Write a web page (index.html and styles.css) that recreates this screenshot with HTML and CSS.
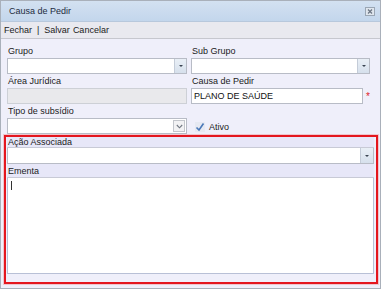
FILE: index.html
```html
<!DOCTYPE html>
<html lang="pt">
<head>
    <meta charset="UTF-8">
    <meta name="viewport" content="width=device-width, initial-scale=1.0">
    <title>Causa de Pedir</title>
    <link rel="stylesheet" href="styles.css">
</head>
<body>

    <div class="window">
        <!-- Title bar -->
        <div class="titlebar">
            <span class="title">Causa de Pedir</span>
            <span class="close-btn">
                <svg width="10" height="9" viewBox="0 0 10 9">
                    <rect x="0.5" y="0.5" width="9" height="8" fill="#dfe6ee" stroke="#9aa6b4"/>
                    <path d="M3 2.5 L7 6.5 M7 2.5 L3 6.5" stroke="#6a7482" stroke-width="1.2"/>
                </svg>
            </span>
        </div>

        <!-- Toolbar -->
        <div class="toolbar">
            <span>Fechar</span> <span class="sep">|</span> <span>Salvar</span> <span>Cancelar</span>
        </div>

        <div class="content">
            <div class="fields">
                <div class="field">
                    <label>Grupo</label>
                    <div class="combo">
                        <div class="combo-text"></div>
                        <div class="combo-btn"><span class="arrow"></span></div>
                    </div>
                </div>
                <div class="field">
                    <label>Sub Grupo</label>
                    <div class="combo">
                        <div class="combo-text"></div>
                        <div class="combo-btn"><span class="arrow"></span></div>
                    </div>
                </div>
                <div class="field">
                    <label>Área Jurídica</label>
                    <div class="input disabled"></div>
                </div>
                <div class="field">
                    <label>Causa de Pedir</label>
                    <div class="required-row">
                        <div class="input">PLANO DE SAÚDE</div>
                        <span class="asterisk">*</span>
                    </div>
                </div>
                <div class="field">
                    <label>Tipo de subsídio</label>
                    <div class="combo">
                        <div class="combo-text"></div>
                        <div class="chevron-btn">
                            <svg width="7" height="5" viewBox="0 0 7 5">
                                <path d="M0.8 1 L3.5 3.8 L6.2 1" fill="none" stroke="#6f7680" stroke-width="1.1"/>
                            </svg>
                        </div>
                    </div>
                </div>
                <div class="field check-field">
                    <span class="checkbox">
                        <svg width="10" height="10" viewBox="0 0 10 10">
                            <path d="M1.5 5.5 L4 8 L8.5 1.5" fill="none" stroke="#4a78b8" stroke-width="1.6"/>
                        </svg>
                    </span>
                    <span>Ativo</span>
                </div>
            </div>

            <!-- Highlighted section -->
            <div class="highlight">
                <div class="band first">Ação Associada</div>
                <div class="combo wide">
                    <div class="combo-text"></div>
                    <div class="combo-btn"><span class="arrow"></span></div>
                </div>
                <div class="band">Ementa</div>
                <div class="textarea"><span class="caret"></span></div>
            </div>
        </div>
    </div>

</body>
</html>
```

FILE: styles.css
```css
body {
    margin: 0;
    font-family: "Liberation Sans", Arial, sans-serif;
    font-size: 9px;
    color: #1b1b1b;
    background-color: #ffffff;
}

.window {
    width: 379px;
    height: 287px;
    border: 1px solid #a9b0ba;
    display: flex;
    flex-direction: column;
    background-color: #efeffa;
}

/* Title bar */
.titlebar {
    height: 20px;
    display: flex;
    align-items: center;
    justify-content: space-between;
    padding: 0 5px 0 8px;
    background: linear-gradient(#d3e1f1, #c3d6ec);
    border-bottom: 1px solid #b8c8dc;
}

.title {
    color: #1e2c3e;
}

.close-btn {
    display: flex;
    margin-top: 1px;
}

/* Toolbar */
.toolbar {
    height: 16px;
    display: flex;
    align-items: center;
    gap: 3px;
    padding-left: 3px;
    background-color: #e9e9ef;
    border-bottom: 1px solid #c6c7ce;
}

.toolbar .sep {
    padding: 0 2px;
}

.content {
    flex: 1;
    padding: 5px 2px 0 3px;
}

/* Form fields */
.fields {
    display: grid;
    grid-template-columns: 180px 179px;
    column-gap: 4px;
    padding-left: 3px;
}

.field {
    display: flex;
    flex-direction: column;
}

.field label {
    height: 14px;
    display: flex;
    align-items: flex-end;
    padding: 0 0 2px 1px;
    box-sizing: border-box;
}

.input {
    height: 16px;
    box-sizing: border-box;
    border: 1px solid #b8bcc6;
    background-color: #ffffff;
    padding-left: 2px;
    display: flex;
    align-items: center;
    color: #111;
}

.input.disabled {
    background-color: #e9e9ec;
    border-color: #cdd0d6;
}

.required-row {
    display: flex;
    align-items: center;
}

.required-row .input {
    width: 174px;
}

.asterisk {
    color: #e01e2a;
    margin-left: 3px;
    font-size: 10px;
    line-height: 10px;
    padding-top: 2px;
}

.combo {
    height: 16px;
    display: flex;
    box-sizing: border-box;
    border: 1px solid #b8bcc6;
    background-color: #ffffff;
}

.combo-text {
    flex: 1;
}

.combo-btn {
    width: 11px;
    display: flex;
    align-items: center;
    justify-content: center;
    background: linear-gradient(#e9eff6, #d6e0ec);
    border-left: 1px solid #c4ccd8;
}

.arrow {
    width: 0;
    height: 0;
    border-left: 2px solid transparent;
    border-right: 2px solid transparent;
    border-top: 2px solid #3a4452;
}

.chevron-btn {
    width: 10px;
    margin: 1px 1px 1px 0;
    display: flex;
    align-items: center;
    justify-content: center;
    background-color: #f2f2f4;
    border: 1px solid #c3c6cc;
}

.check-field {
    flex-direction: row;
    align-items: center;
    gap: 4px;
    padding: 16px 0 0 4px;
}

.checkbox {
    width: 10px;
    height: 10px;
    display: flex;
    background-color: #e6e9f2;
}

/* Red framed section */
.highlight {
    margin-top: 1px;
    height: 149px;
    box-sizing: border-box;
    border: 2px solid #e4161e;
    box-shadow: 0 0 0 1px rgba(240, 120, 120, 0.35);
    padding: 0 2px 8px 1px;
    display: flex;
    flex-direction: column;
}

.band {
    height: 14px;
    flex-shrink: 0;
    box-sizing: border-box;
    display: flex;
    align-items: flex-end;
    padding: 0 0 1px 1px;
    background-color: #e7e7f8;
    border-bottom: 1px solid #c8cad6;
}

.band.first {
    height: 11px;
    line-height: 9px;
    padding-bottom: 0;
}

.combo.wide {
    height: 16px;
    flex-shrink: 0;
    border-top: none;
}

.combo.wide .combo-btn {
    width: 12px;
}

.textarea {
    height: 96px;
    flex-shrink: 0;
    box-sizing: border-box;
    border: 1px solid #b8c0d6;
    border-top: none;
    background-color: #ffffff;
    padding: 3px 0 0 3px;
}

.caret {
    display: block;
    width: 1px;
    height: 9px;
    background-color: #333;
}
```
